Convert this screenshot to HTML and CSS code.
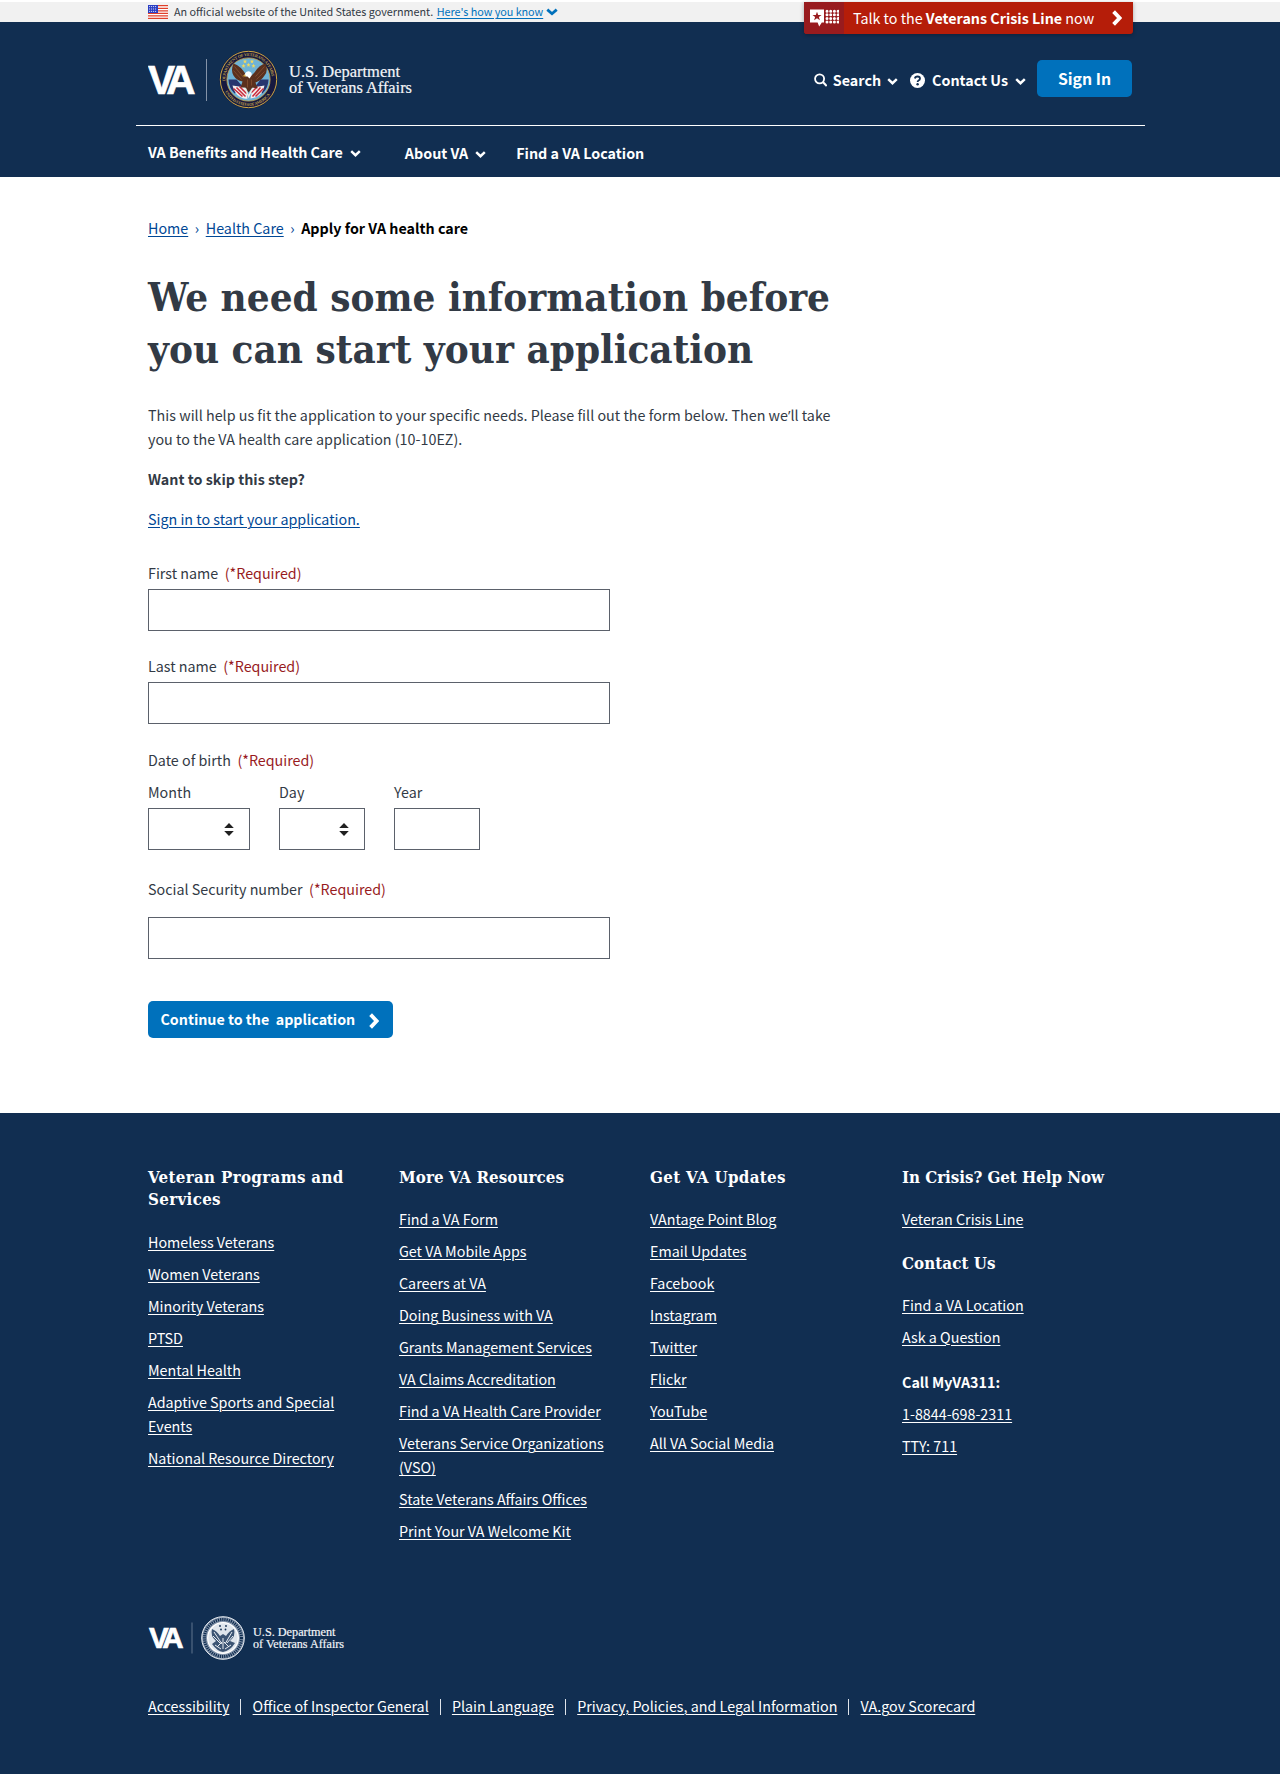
FILE: index.html
```html
<!DOCTYPE html>
<html lang="en">
<head>
<meta charset="utf-8">
<title>Apply for VA health care</title>
<link rel="stylesheet" href="styles.css">
</head>
<body>
<svg class="defs" width="0" height="0" aria-hidden="true">
  <defs>
    <symbol id="down" viewBox="0 0 11 7"><path d="M1.2 1.2 5.5 5.2 9.8 1.2" fill="none" stroke="currentColor" stroke-width="2.5"/></symbol>
    <symbol id="right" viewBox="0 0 10 16"><path d="M1.6 1.6 7.6 8 1.6 14.4" fill="none" stroke="currentColor" stroke-width="3.8"/></symbol>
    <path id="ring-top" d="M-22.8 4A23.2 23.2 0 1 1 22.8 4"/>
    <path id="ring-bottom" d="M-25 8.5A26.4 26.4 0 0 0 25 8.5"/>
    <path id="star" d="M0-2.2.6-.7 2.1-.7.9.3 1.3 1.8 0 .9-1.3 1.8-.9.3-2.1-.7-.6-.7Z"/>
  </defs>
</svg>

<div class="gov">
  <div class="wrap gov-row">
    <svg class="flag" width="20" height="14" viewBox="0 0 20 14"><rect width="20" height="14" fill="#fff"/><path d="M0 .7h20M0 3.3h20M0 5.9h20M0 8.4h20M0 10.9h20M0 13.4h20" stroke="#e0402a" stroke-width="1.2"/><rect width="10" height="8" fill="#2b3fc4"/><path d="M1 1.6h8M1 4h8M1 6.4h8" stroke="#fff" stroke-width=".8" stroke-dasharray="1.1 .9"/></svg>
    <span class="gov-text">An official website of the United States government.</span>
    <a class="gov-link" href="#">Here's how you know</a>
    <svg class="gov-chev" width="12" height="8" viewBox="0 0 12 8"><path d="M1.3 1.6 6 5.7 10.7 1.6" fill="none" stroke="#0071bc" stroke-width="2.8"/></svg>
    <a class="crisis" href="#">
      <span class="crisis-icon"><svg width="29" height="18" viewBox="0 0 29 18"><path d="M0 .5h14v13h-2.2L9.2 17.5 7.6 13.500H0Z" fill="#fff"/><path d="M7 2.700 8.200 5.900h3.300L8.900 7.900l1 3.300L7 9.200l-2.900 2 1-3.300L2.500 5.900h3.300Z" fill="#981b1e"/><g stroke="#fff" stroke-width="3" stroke-linecap="round" stroke-dasharray="0 3.700"><path d="M17 2.200h11.300M17 5.800h11.300M17 9.400h11.300M17 13h11.300"/></g></svg></span>
      <span class="crisis-text">Talk to the <b>Veterans Crisis Line</b> now</span>
      <svg class="crisis-chev" width="10" height="16"><use href="#right"/></svg>
    </a>
  </div>
</div>

<header class="header">
  <div class="wrap brand">
    <svg class="logo" width="270" height="64" viewBox="0 0 270 64" role="img">
      <text class="va" x="0 18.300" y="47" font-size="40.500">VA</text>
      <path d="M58.500 12v42" stroke="#8493a8" stroke-width="1"/>
      <g transform="translate(100.500 32.500)">
        <circle r="29" fill="#17193f"/><circle r="28.200" fill="none" stroke="#cfa944" stroke-width="1"/>
        <circle r="21.600" fill="#6fb3d6" stroke="#c9a547" stroke-width=".8"/>
        <text class="ring"><textPath href="#ring-top" startOffset="3%" textLength="72">DEPARTMENT OF VETERANS AFFAIRS</textPath></text>
        <text class="ring"><textPath href="#ring-bottom" startOffset="6%" textLength="54">UNITED STATES OF AMERICA</textPath></text>
        <path d="M-20 0Q-20 8-14 14L-5 8-12 0ZM20 0Q20 8 14 14L6 8 12 0Z" fill="#27356f"/>
        <g fill="#f4d95a"><use href="#star" x="-3.500" y="-18"/><use href="#star" x="3.500" y="-18"/><use href="#star" x="-5" y="-13.500"/><use href="#star" x="5" y="-13.500"/><use href="#star" y="-14.500"/></g>
        <path d="M-16 6Q-14 14-9 17-4 20-1 19L-3 8ZM16 6Q14 15 8 17.500L2 19 4 8Z" fill="#f4eeee"/>
        <path d="M-15 9-6 17M-12 8-3 17M-9 7-2 14M15 9 7 17M12 8 4 17M9 7 3 13" stroke="#c82b3c" stroke-width="1.500"/>
        <path d="M-15-16Q-18-9-15-4-12 1-6 2L-8 8-3 8 0 13 4 8 9 9 7 3Q13 1 16-4 20-9 17-16 11-15 6-7L3-4-2-4Q-8-14-15-16Z" fill="#5b301d"/>
        <path d="M-14-13-5-2M-15-9-7 0M16-13 7-3M16-8 8 0M-1 0-1 8M3 0 3 6" stroke="#875232" stroke-width=".8"/>
        <path d="M-4-5Q-2-9 1-8 4-7 3-4L1-1-1-3-3-3Z" fill="#fff"/><path d="M-3-5-6-3.500-3-2.800Z" fill="#e7b53b"/>
        <path d="M-3 9 0 17 4 9" stroke="#f2efe4" stroke-width="1.400" fill="none"/>
      </g>
      <text class="dept" x="141" y="30" font-size="17" textLength="111" lengthAdjust="spacingAndGlyphs">U.S. Department</text>
      <text class="dept" x="141" y="46" font-size="17" textLength="123" lengthAdjust="spacingAndGlyphs">of Veterans Affairs</text>
    </svg>
    <div class="tools">
      <a class="tool search" href="#"><svg width="13" height="14" viewBox="0 0 13.500 14"><circle cx="5.800" cy="5.800" r="4.700" fill="none" stroke="#fff" stroke-width="1.900"/><path d="m9.200 9.200 4 4" stroke="#fff" stroke-width="2.200"/></svg><span>Search</span><svg class="chev" width="11" height="7"><use href="#down"/></svg></a>
      <a class="tool contact" href="#"><svg width="15" height="15" viewBox="0 0 15 15"><circle cx="7.500" cy="7.500" r="7.500" fill="#fff"/><path d="M4.900 5.500Q5.200 3.500 7.500 3.500 10 3.500 10 5.600 10 6.900 8.600 7.500 7.600 8 7.600 9" fill="none" stroke="#112e51" stroke-width="1.800"/><circle cx="7.600" cy="11.300" r="1.200" fill="#112e51"/></svg><span>Contact Us</span><svg class="chev" width="11" height="7"><use href="#down"/></svg></a>
      <a class="signin" href="#">Sign In</a>
    </div>
  </div>
  <div class="rule"></div>
  <nav class="wrap nav">
    <a class="nav-benefits" href="#"><span>VA Benefits and Health Care</span><svg class="chev" width="11" height="7"><use href="#down"/></svg></a>
    <a class="nav-about" href="#"><span>About VA</span><svg class="chev" width="11" height="7"><use href="#down"/></svg></a>
    <a class="nav-find" href="#">Find a VA Location</a>
  </nav>
</header>

<main class="wrap main">
  <div class="crumbs"><a href="#">Home</a><i>›</i><a href="#">Health Care</a><i>›</i><b>Apply for VA health care</b></div>
  <h1>We need some information before<br>you can start your application</h1>
  <p class="intro">This will help us fit the application to your specific needs. Please fill out the form below. Then we<span class="apos">’</span>ll take<br>you to the VA health care application (10-10EZ).</p>
  <p class="skip"><b>Want to skip this step?</b></p>
  <p class="start"><a href="#">Sign in to start your application.</a></p>
  <form>
    <div class="field"><label>First name<em>(*Required)</em></label><input class="box" type="text"></div>
    <div class="field"><label>Last name<em>(*Required)</em></label><input class="box" type="text"></div>
    <div class="dob">
      <label>Date of birth<em>(*Required)</em></label>
      <div class="dates">
        <div class="date"><label>Month</label><div class="box select month"><svg width="10" height="13" viewBox="0 0 10 13"><path d="M5 0 9.800 5H.2ZM5 13 .2 8h9.600Z" fill="#212121"/></svg></div></div>
        <div class="date"><label>Day</label><div class="box select"><svg width="10" height="13" viewBox="0 0 10 13"><path d="M5 0 9.800 5H.2ZM5 13 .2 8h9.600Z" fill="#212121"/></svg></div></div>
        <div class="date"><label>Year</label><input class="box year" type="text"></div>
      </div>
    </div>
    <div class="field ssn"><label>Social Security number<em>(*Required)</em></label><input class="box" type="text"></div>
    <button class="continue" type="button"><span>Continue to the</span><span>application</span><svg width="10" height="16"><use href="#right"/></svg></button>
  </form>
</main>

<footer class="footer">
  <div class="wrap">
    <div class="cols">
      <section>
        <h2 class="wide">Veteran Programs and<br>Services</h2>
        <ul><li><a href="#">Homeless Veterans</a></li><li><a href="#">Women Veterans</a></li><li><a href="#">Minority Veterans</a></li><li><a href="#">PTSD</a></li><li><a href="#">Mental Health</a></li><li><a href="#">Adaptive Sports and Special<br>Events</a></li><li><a href="#">National Resource Directory</a></li></ul>
      </section>
      <section>
        <h2>More VA Resources</h2>
        <ul><li><a href="#">Find a VA Form</a></li><li><a href="#">Get VA Mobile Apps</a></li><li><a href="#">Careers at VA</a></li><li><a href="#">Doing Business with VA</a></li><li><a href="#">Grants Management Services</a></li><li><a href="#">VA Claims Accreditation</a></li><li><a href="#">Find a VA Health Care Provider</a></li><li><a href="#">Veterans Service Organizations<br>(VSO)</a></li><li><a href="#">State Veterans Affairs Offices</a></li><li><a href="#">Print Your VA Welcome Kit</a></li></ul>
      </section>
      <section>
        <h2 class="wide">Get VA Updates</h2>
        <ul><li><a href="#">VAntage Point Blog</a></li><li><a href="#">Email Updates</a></li><li><a href="#">Facebook</a></li><li><a href="#">Instagram</a></li><li><a href="#">Twitter</a></li><li><a href="#">Flickr</a></li><li><a href="#">YouTube</a></li><li><a href="#">All VA Social Media</a></li></ul>
      </section>
      <section>
        <h2 class="tight">In Crisis? Get Help Now</h2>
        <ul><li><a href="#">Veteran Crisis Line</a></li></ul>
        <h2 class="later">Contact Us</h2>
        <ul><li><a href="#">Find a VA Location</a></li><li><a href="#">Ask a Question</a></li></ul>
        <ul class="call"><li><b>Call MyVA311:</b></li><li><a href="#">1-8844-698-2311</a></li><li><a href="#">TTY: 711</a></li></ul>
      </section>
    </div>
    <svg class="foot-logo" width="200" height="56" viewBox="0 0 200 56" role="img">
      <text class="va" x="1 14.300" y="38" font-size="29.500">VA</text>
      <path d="M44 12.500v31" stroke="#61748e" stroke-width="1"/>
      <g transform="translate(75 28)">
        <circle r="21.300" fill="#8797ad" stroke="#e3e8ee" stroke-width="1"/>
        <circle r="18.500" fill="none" stroke="#112e51" stroke-width="3" stroke-dasharray="1.300 .9"/>
        <circle r="15.300" fill="#dfe5ec" stroke="#fff" stroke-width="1.300"/>
        <path d="M-11-9Q-13-2-7 3L-11 6Q-6 13 0 14 7 13 12 5L7 3Q13-2 11-9 6-7 3-2L0-4-3-2Q-6-7-11-9Z" fill="#3c5473"/>
        <path d="M-9-6-1 6M-10-2-3 5M9-6 2 6M10-2 4 5M-8 7-2 11M8 7 2 11M0 0v11M-6 9-1 4M6 9 1 4" stroke="#e8edf2" stroke-width="1"/>
        <g fill="#112e51"><circle cx="-3" cy="-12" r=".9"/><circle cx="3" cy="-12" r=".9"/><circle cx="-2" cy="-8.500" r=".9"/><circle cx="2.500" cy="-8.500" r=".9"/></g>
      </g>
      <text class="dept" x="105" y="26" font-size="12.500" textLength="82.500" lengthAdjust="spacingAndGlyphs">U.S. Department</text>
      <text class="dept" x="105" y="38" font-size="12.500" textLength="91" lengthAdjust="spacingAndGlyphs">of Veterans Affairs</text>
    </svg>
    <div class="legal"><a href="#">Accessibility</a><i></i><a href="#">Office of Inspector General</a><i></i><a href="#">Plain Language</a><i></i><a href="#">Privacy, Policies, and Legal Information</a><i></i><a href="#">VA.gov Scorecard</a></div>
  </div>
</footer>
</body>
</html>
```
FILE: styles.css
```css
* { box-sizing: border-box; }
body { margin: 0; background: #fff; color: #323a45; font: 14.3px/24px "Noto Sans CJK SC", "Open Sans", sans-serif; }
p, h1, h2, ul { margin: 0; padding: 0; }
ul { list-style: none; }
svg { display: block; flex: none; }
a { color: #004795; text-decoration: underline; text-decoration-thickness: 1px; text-underline-offset: 2px; white-space: nowrap; }
.defs { position: absolute; }
.wrap { width: 984px; margin: 0 auto; }

.gov { margin-top: 2px; height: 20px; background: #f1f1f1; }
.gov-row { position: relative; display: flex; align-items: center; height: 20px; font-size: 10.8px; line-height: 18px; }
.gov-text { margin: -2px 0 0 6px; white-space: nowrap; }
.gov-link { margin: -2px 0 0 3.5px; color: #0071bc; letter-spacing: -.03px; }
.gov-chev { margin-left: 2.5px; }
.crisis { position: absolute; top: 0; right: -1px; z-index: 1; display: flex; align-items: center; width: 329px; height: 32px; overflow: hidden; border-radius: 0 0 3px 3px; background: #b51d09; color: #fff; font-size: 14.3px; text-decoration: none; box-shadow: 0 1px 4px rgba(0, 0, 0, .3); }
.crisis-icon { display: flex; align-items: center; justify-content: center; width: 40px; height: 32px; margin-right: 9px; background: #981b1e; }
.crisis-chev { margin-left: auto; margin-right: 11px; }

.header { height: 155px; background: #112e51; color: #fff; }
.header a { color: #fff; font-weight: 700; text-decoration: none; }
.brand { display: flex; justify-content: space-between; height: 103px; padding-top: 25px; }
.va { fill: #fff; stroke: #fff; stroke-width: .7px; font-family: "Liberation Sans", sans-serif; font-weight: 700; }
.dept { fill: #f3f5f8; stroke: #f3f5f8; stroke-width: .2px; font-family: "Liberation Serif", serif; }
.ring { fill: #bd9d4a; font: 700 4.2px "Liberation Serif", serif; }
.tools { display: flex; align-items: flex-start; }
.tool { display: flex; align-items: center; height: 24px; margin-top: 21px; }
.tool span { margin: 0 6px 0 5.5px; }
.contact { margin-left: 12px; }
.contact span { margin: 0 7px; }
.chev { margin-top: 3px; }
.header .signin { width: 95px; height: 37px; margin: 13px 0 0 11px; border-radius: 5px; background: #0071bc; font-size: 15.8px; line-height: 37px; text-align: center; }
.rule { width: 1009px; height: 1px; margin: 0 auto; background: #fff; }
.nav { display: flex; padding-top: 15px; }
.nav a { display: flex; align-items: center; height: 24px; }
.nav .chev { margin-left: 7px; }
.nav .nav-benefits { margin: -1px 44px 0 0; }
.nav-about { margin-right: 30px; }

.main { padding-top: 39px; }
.crumbs { display: flex; }
.crumbs i { width: 17.5px; color: #004795; font-style: normal; text-align: center; }
.crumbs b { color: #000; }
h1 { margin: 31px 0 28px; font: 700 40px/52px "DejaVu Serif Condensed", "DejaVu Serif", serif; white-space: nowrap; }
.intro, .skip { margin-bottom: 16px; white-space: nowrap; }
.intro { letter-spacing: .016px; }
.apos { font-family: "Open Sans", sans-serif; line-height: 1; }
.start { margin-bottom: 30px; }
label { display: block; height: 24px; white-space: nowrap; }
em { margin-left: 6.5px; color: #981b1e; font-style: normal; }
.field { margin-bottom: 23px; }
.box { display: block; width: 462px; height: 42px; margin: 4px 0 0; padding: 0 10px; border: 1px solid #5b616b; border-radius: 0; background: #fff; }
.dob { margin: 24px 0 27px; }
.dates { display: flex; gap: 29px; margin-top: 8px; }
.select { display: flex; align-items: center; justify-content: flex-end; width: 86px; padding: 0 15px 0 0; }
.month { width: 102px; }
.year { width: 86px; }
.ssn { margin-bottom: 42px; }
.ssn .box { margin-top: 16px; }
.continue { display: flex; align-items: center; width: 245px; height: 37px; padding: 0 0 0 12.5px; border: 0; border-radius: 5px; background: #0071bc; color: #fff; font: inherit; font-weight: 700; font-size: 14.25px; white-space: nowrap; }
.continue span { margin-top: -1px; }
.continue span + span { margin-left: 6.5px; }
.continue svg { margin: 3px 14.5px 0 auto; }

.footer { height: 661px; margin-top: 75px; padding-top: 53px; background: #112e51; color: #fff; }
.footer a { color: #fff; }
.cols { display: grid; grid-template-columns: 251px 251px 252px 230px; height: 444px; }
h2 { margin-bottom: 19px; font: 700 16.8px/22.4px "DejaVu Serif Condensed", "DejaVu Serif", serif; letter-spacing: .06px; white-space: nowrap; }
.wide { letter-spacing: .33px; }
.tight { letter-spacing: -.04px; }
li + li { margin-top: 8px; }
.later { margin: 20.6px 0 18.4px; }
.call { margin-top: 21px; }
.legal { display: flex; align-items: center; margin-top: 28px; }
.legal i { width: 1px; height: 16px; margin: 2px 11.2px 0 11px; background: #dfe4ea; }
```
